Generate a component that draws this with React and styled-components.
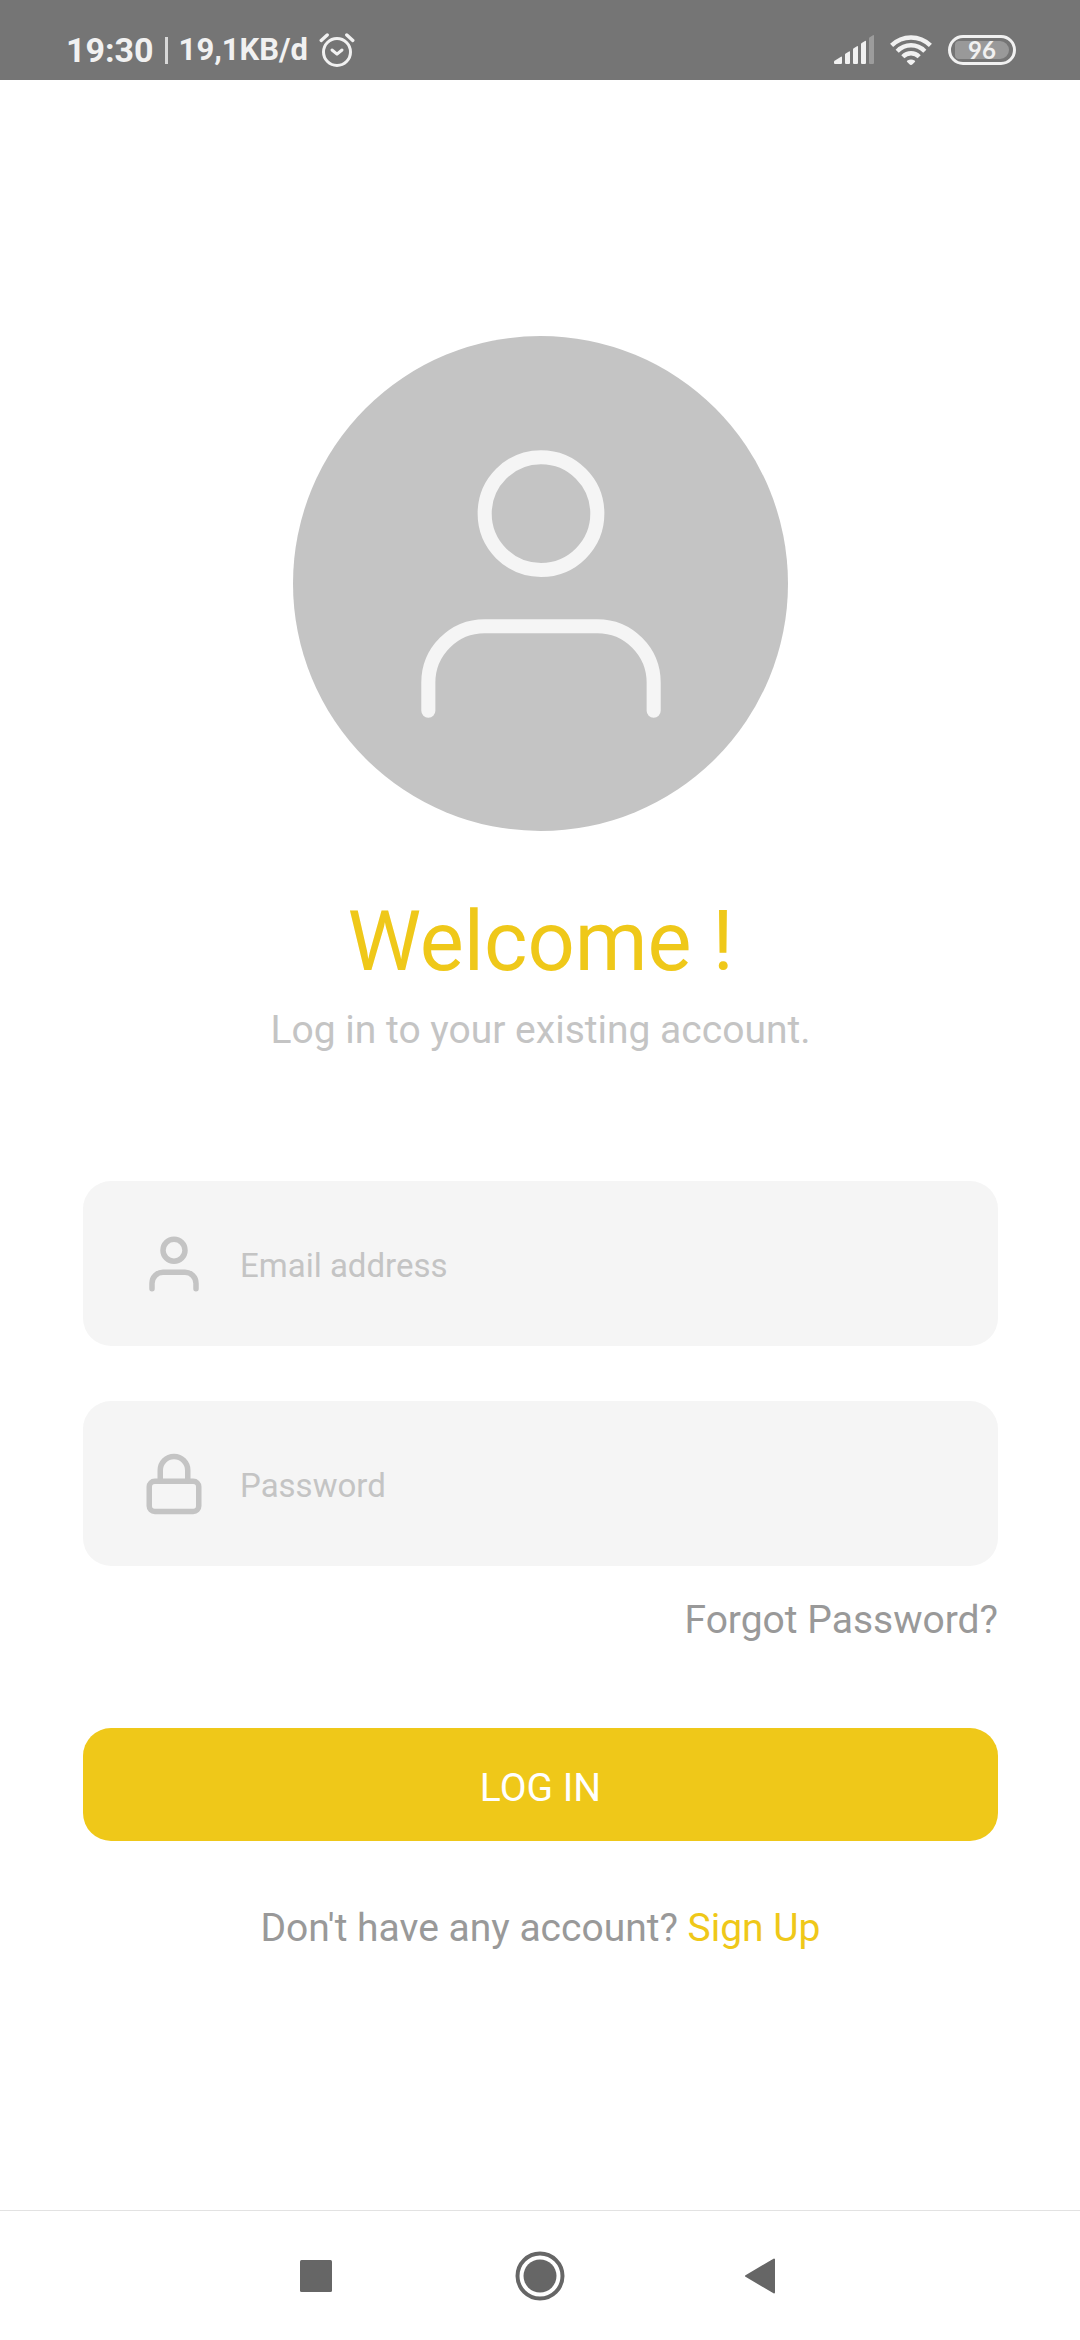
import React from "react";
import styled, { createGlobalStyle } from "styled-components";

const color = {
  accent: "#efc819",
  muted: "#c4c4c4",
  text: "#999999",
  field: "#f5f5f5",
  bar: "#757575",
  barText: "#f1f1f1",
  nav: "#666666",
};

const GlobalStyle = createGlobalStyle`
  *, *::before, *::after { box-sizing: border-box; }
  body {
    margin: 0;
    background: #ffffff;
    font-family: Roboto, "Liberation Sans", sans-serif;
  }
  button, input { font-family: inherit; }
`;

const Screen = styled.div`
  min-height: 100vh;
  display: flex;
  flex-direction: column;
`;

const StatusBar = styled.header`
  height: 80px;
  padding: 20px 64px 0 66px;
  display: flex;
  align-items: center;
  justify-content: space-between;
  background: ${color.bar};
  color: ${color.barText};
`;

const StatusGroup = styled.div`
  display: flex;
  align-items: center;
  gap: ${(p) => p.$gap}px;
`;

const Clock = styled.time`
  font-size: 34px;
  line-height: 40px;
  font-weight: 700;
`;

const Divider = styled.span`
  width: 3px;
  height: 27px;
  background: ${color.barText};
  opacity: 0.8;
`;

const NetworkSpeed = styled.span`
  font-size: 31px;
  line-height: 40px;
  font-weight: 700;
`;

const Battery = styled.div`
  width: 68px;
  height: 30px;
  padding: 3px 4px;
  border: 3px solid ${color.barText};
  border-radius: 15px;
  display: flex;
`;

const BatteryLevel = styled.span`
  flex: 1;
  display: flex;
  align-items: center;
  justify-content: center;
  border-radius: 4px 9px 9px 4px;
  background: #999999;
  font-family: Lato, sans-serif;
  font-size: 24px;
  line-height: 18px;
  font-weight: 700;
`;

const Main = styled.main`
  flex: 1;
  padding: 256px 82px 64px 83px;
  display: flex;
  flex-direction: column;
  align-items: center;
`;

const Avatar = styled.div`
  width: 495px;
  height: 495px;
  border-radius: 50%;
  display: flex;
  align-items: center;
  justify-content: center;
  background: ${color.muted};
  color: ${color.field};
`;

const Title = styled.h1`
  margin: 63px 0 17px;
  font-size: 83px;
  line-height: 96px;
  font-weight: 400;
  color: ${color.accent};
`;

const Subtitle = styled.p`
  margin: 0;
  font-size: 39px;
  line-height: 46px;
  color: ${color.muted};
`;

const Form = styled.form`
  width: 100%;
  margin: 128px 0 64px;
  display: flex;
  flex-direction: column;
`;

const Fields = styled.div`
  display: flex;
  flex-direction: column;
  gap: 55px;
`;

const Field = styled.label`
  height: 165px;
  padding: 0 58px;
  display: flex;
  align-items: center;
  gap: 33px;
  border-radius: 28px;
  background: ${color.field};
  color: ${color.muted};
`;

const TextBox = styled.input`
  flex: 1;
  min-width: 0;
  height: 100%;
  padding: 4px 0 0;
  border: 0;
  outline: 0;
  background: transparent;
  font-size: 33px;
  color: ${color.text};
  &::placeholder {
    color: ${color.muted};
    opacity: 1;
  }
`;

const TextLink = styled.a`
  font-size: 39px;
  line-height: 46px;
  text-decoration: none;
  color: ${(p) => (p.$accent ? color.accent : color.text)};
`;

const ForgotRow = styled.div`
  margin: 31px 0 85px;
  display: flex;
  justify-content: flex-end;
`;

const SubmitButton = styled.button`
  height: 113px;
  padding: 6px 0 0;
  border: 0;
  border-radius: 28px;
  background: ${color.accent};
  font-size: 39px;
  line-height: 46px;
  color: #ffffff;
`;

const Prompt = styled.p`
  margin: 0;
  font-size: 39px;
  line-height: 46px;
  color: ${color.text};
`;

const NavBar = styled.nav`
  height: 130px;
  border-top: 1px solid #e2e2e2;
  display: flex;
  align-items: center;
  justify-content: center;
  gap: 140px;
`;

const NavButton = styled.button`
  width: 80px;
  height: 80px;
  padding: 0;
  border: 0;
  display: flex;
  align-items: center;
  justify-content: center;
  background: transparent;
  color: ${color.nav};
`;

const UserIcon = ({ size, stroke }) => (
  <svg width={size} height={size} viewBox="0 0 24 24" fill="none" stroke="currentColor" strokeWidth={stroke} strokeLinecap="round" strokeLinejoin="round" aria-hidden="true">
    <path d="M20 21v-2a4 4 0 0 0-4-4H8a4 4 0 0 0-4 4v2" />
    <circle cx="12" cy="7" r="4" />
  </svg>
);

const LockIcon = () => (
  <svg width="66" height="66" viewBox="0 0 24 24" fill="none" stroke="currentColor" strokeWidth="2" strokeLinecap="round" strokeLinejoin="round" aria-hidden="true">
    <rect x="3" y="11" width="18" height="11" rx="2" />
    <path d="M7 11V7a5 5 0 0 1 10 0v4" />
  </svg>
);

const AlarmIcon = () => (
  <svg width="36" height="36" viewBox="0 0 36 36" fill="none" stroke="currentColor" strokeLinecap="round" strokeLinejoin="round" aria-hidden="true">
    <circle cx="18" cy="20" r="13.5" strokeWidth="3" />
    <path d="M13 18l5 4.200 5-4.200" strokeWidth="3" />
    <path d="M2.200 8.400l6-5.400M33.800 8.400l-6-5.400" strokeWidth="3.400" />
  </svg>
);

const SignalIcon = () => (
  <svg width="40" height="30" viewBox="0 0 40 30" fill="currentColor" aria-hidden="true">
    <path d="M1 25.6L7 21.8q1-.6 1 .6V28q0 1-1 1H1q-1 0-1-1v-1q0-.9 1-1.4z" />
    <path d="M11 19.6q0-.7.7-1.1l3.300-2q1-.6 1 .6V28q0 1-1 1h-3q-1 0-1-1z" />
    <path d="M19 14.4q0-.7.7-1.1l3.300-2q1-.6 1 .6V28q0 1-1 1h-3q-1 0-1-1z" />
    <path d="M27 9q0-.7.7-1.1l3.300-2q1-.6 1 .6V28q0 1-1 1h-3q-1 0-1-1z" />
    <path opacity="0.32" d="M35 3.400q0-.7.7-1.100l3.300-2q1-.6 1 .6V28q0 1-1 1h-3q-1 0-1-1z" />
  </svg>
);

const WifiIcon = () => (
  <svg width="42" height="30" viewBox="0 0 42 30" fill="none" stroke="currentColor" strokeWidth="4.4" aria-hidden="true">
    <path d="M1.600 10.400C12.500-.2 29.500-.2 40.400 10.400" />
    <path d="M7.200 16.200C15 8.300 27 8.300 34.800 16.200" />
    <path d="M12.800 21.800C17.500 17.100 24.500 17.100 29.200 21.800" />
    <path d="M21 30q-1 0-1.800-.9l-2-2q-.9-1.100.2-1.700 3.600-2 7.200 0 1.100.6.200 1.700l-2 2Q22 30 21 30z" fill="currentColor" stroke="none" />
  </svg>
);

const RecentsIcon = () => (
  <svg width="40" height="32" viewBox="0 0 40 32" aria-hidden="true">
    <rect width="32" height="32" rx="1.500" fill="currentColor" />
  </svg>
);

const HomeIcon = () => (
  <svg width="50" height="50" viewBox="0 0 50 50" aria-hidden="true">
    <circle cx="25" cy="25" r="22.500" fill="none" stroke="currentColor" strokeWidth="4" />
    <circle cx="25" cy="25" r="16.500" fill="currentColor" />
  </svg>
);

const BackIcon = () => (
  <svg width="32" height="36" viewBox="0 0 32 36" aria-hidden="true">
    <path d="M2 18L30 1.500v33z" fill="currentColor" stroke="currentColor" strokeWidth="2" strokeLinejoin="round" />
  </svg>
);

export default function App() {
  return (
    <Screen>
      <GlobalStyle />
      <StatusBar>
        <StatusGroup $gap={11}>
          <Clock>19:30</Clock>
          <Divider />
          <NetworkSpeed>19,1KB/d</NetworkSpeed>
          <AlarmIcon />
        </StatusGroup>
        <StatusGroup $gap={16}>
          <SignalIcon />
          <WifiIcon />
          <Battery>
            <BatteryLevel>96</BatteryLevel>
          </Battery>
        </StatusGroup>
      </StatusBar>

      <Main>
        <Avatar>
          <UserIcon size={338} stroke={1} />
        </Avatar>
        <Title>Welcome !</Title>
        <Subtitle>Log in to your existing account.</Subtitle>

        <Form onSubmit={(e) => e.preventDefault()}>
          <Fields>
            <Field>
              <UserIcon size={66} stroke={2} />
              <TextBox type="email" name="email" placeholder="Email address" aria-label="Email address" />
            </Field>
            <Field>
              <LockIcon />
              <TextBox type="password" name="password" placeholder="Password" aria-label="Password" />
            </Field>
          </Fields>
          <ForgotRow>
            <TextLink href="#forgot">Forgot Password?</TextLink>
          </ForgotRow>
          <SubmitButton type="submit">LOG IN</SubmitButton>
        </Form>

        <Prompt>
          Don't have any account? <TextLink href="#signup" $accent>Sign Up</TextLink>
        </Prompt>
      </Main>

      <NavBar>
        <NavButton type="button" aria-label="Recent apps">
          <RecentsIcon />
        </NavButton>
        <NavButton type="button" aria-label="Home">
          <HomeIcon />
        </NavButton>
        <NavButton type="button" aria-label="Back">
          <BackIcon />
        </NavButton>
      </NavBar>
    </Screen>
  );
}
